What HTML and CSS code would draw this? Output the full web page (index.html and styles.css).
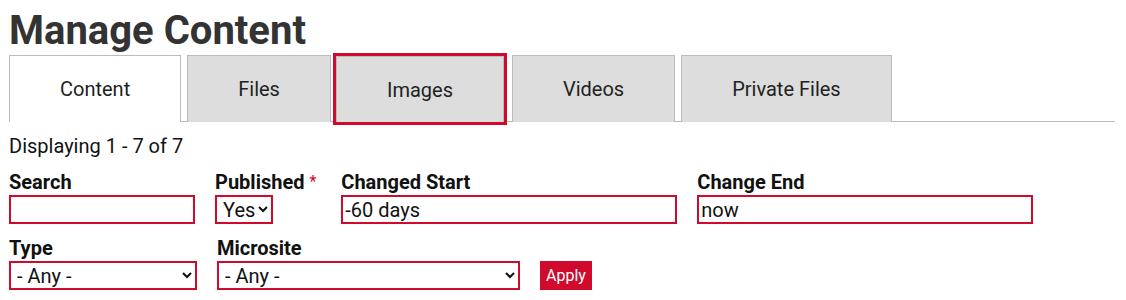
FILE: index.html
```html
<!DOCTYPE html>
<html lang="en">
<head>
  <meta charset="UTF-8" />
  <title>Manage Content</title>
  <link rel="stylesheet" href="styles.css">
</head>
<body>
  <div class="page">
    <h1 class="page-title">Manage Content</h1>

    <!-- Tabs -->
    <ul class="tabs">
      <li><a class="tab active" href="#">Content</a></li>
      <li><a class="tab" href="#">Files</a></li>
      <li><a class="tab focused" href="#">Images</a></li>
      <li><a class="tab" href="#">Videos</a></li>
      <li><a class="tab" href="#">Private Files</a></li>
    </ul>

    <p class="summary">Displaying 1 - 7 of 7</p>

    <!-- Filters -->
    <form class="filters">
      <div class="field">
        <label for="search">Search</label>
        <input id="search" class="f-search" type="text" />
      </div>
      <div class="field field-published">
        <label for="published">Published <span class="required">*</span></label>
        <select id="published" class="f-published">
          <option>Yes</option>
          <option>No</option>
        </select>
      </div>
      <div class="field">
        <label for="start">Changed Start</label>
        <input id="start" class="f-date" type="text" value="-60 days" />
      </div>
      <div class="field">
        <label for="end">Change End</label>
        <input id="end" class="f-date" type="text" value="now" />
      </div>
      <div class="field">
        <label for="type">Type</label>
        <select id="type" class="f-type">
          <option>- Any -</option>
        </select>
      </div>
      <div class="field">
        <label for="microsite">Microsite</label>
        <select id="microsite" class="f-microsite">
          <option>- Any -</option>
        </select>
      </div>
      <div class="field field-actions">
        <button type="button" class="apply">Apply</button>
      </div>
    </form>
  </div>
</body>
</html>
```

FILE: styles.css
```css
* { box-sizing: border-box; }
body {
  margin: 0;
  font-family: Roboto, "Liberation Sans", sans-serif;
  color: #111;
  background: #fff;
}
.page { padding: 0 11px 0 9px; }

.page-title {
  margin: 7px 0 0;
  font-size: 40px;
  line-height: 48px;
  font-weight: 700;
  color: #333;
}

/* tabs */
.tabs {
  list-style: none;
  margin: 0; padding: 0;
  display: flex;
  gap: 6px;
  border-bottom: 1px solid #bbb;
}
.tab {
  display: flex;
  align-items: center;
  height: 67px;
  margin-bottom: -1px;
  padding: 0 50px;
  font-size: 20px;
  color: #222;
  text-decoration: none;
  background: #ddd;
  border: 1px solid #bbb;
  border-bottom: none;
}
.tab.active { background: #fff; }
.tab.focused {
  outline: 3px solid #cf0a2c;
  height: 66px;
  margin: 1px 2px -1px -1px;
}

.summary {
  margin: 12px 0 0;
  font-size: 20px;
  line-height: 24px;
}

/* filters */
.filters {
  display: flex;
  flex-wrap: wrap;
  column-gap: 20px;
  row-gap: 13px;
  margin-top: 13px;
}
.field {
  display: flex;
  flex-direction: column;
  align-items: flex-start;
}
.field-published { margin-right: 5px; }
.field-actions { justify-content: flex-end; }
.field label {
  font-size: 20px;
  line-height: 22px;
  font-weight: 700;
  margin-bottom: 2px;
}
.required { color: #e2001a; font-weight: 400; font-size: 16px; vertical-align: top; }

.field input, .field select {
  height: 29px;
  border: 2px solid #cf0a2c;
  border-radius: 0;
  font-family: inherit;
  font-size: 20px;
  color: #111;
  background: #fff;
  padding: 0 2px;
}
.field select { padding: 0 0 0 2px; }
.f-search { width: 186px; }
.f-published { width: 58px; }
.f-date { width: 336px; }
.f-type { width: 188px; }
.f-microsite { width: 303px; }

.apply {
  height: 29px;
  padding: 0 6px;
  border: none;
  background: #cf0a2c;
  color: #fff;
  font-family: inherit;
  font-size: 16px;
}
```
